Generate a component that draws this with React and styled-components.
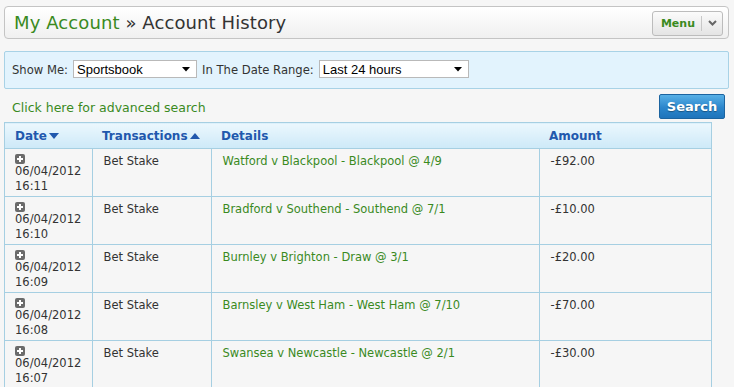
import React from "react";
import styled, { createGlobalStyle } from "styled-components";

const Global = createGlobalStyle`
  html, body { margin: 0; padding: 0; background: #f6f6f6; }
  body { font-family: "DejaVu Sans", Verdana, sans-serif; color: #333; }
`;

const Page = styled.div`
  padding: 6px 5px 0 4px;
  width: 725px;
`;

const Header = styled.div`
  height: 31px;
  border: 1px solid #c4c4c4;
  border-radius: 4px;
  background: linear-gradient(#ffffff, #f0f0f0);
  display: flex;
  align-items: center;
  justify-content: space-between;
  padding: 0 5px 0 9px;
`;

const Title = styled.h1`
  margin: 0;
  font-size: 18px;
  font-weight: normal;
  color: #333;
  letter-spacing: 0.1px;
`;

const Crumb = styled.span`
  color: #3a8a1e;
`;

const MenuButton = styled.div`
  display: flex;
  align-items: center;
  height: 23px;
  margin-top: 1px;
  border: 1px solid #bcbcbc;
  border-radius: 3px;
  background: linear-gradient(#fbfbfb, #e4e4e4);
  font-size: 11px;
  font-weight: bold;
  color: #3a8a1e;
`;

const MenuLabel = styled.span`
  padding: 0 6px 0 8px;
  border-right: 1px solid #c8c8c8;
  line-height: 15px;
`;

const MenuCaret = styled.span`
  display: flex;
  width: 20px;
  justify-content: center;
`;

const Filter = styled.div`
  margin-top: 12px;
  height: 36px;
  border: 1px solid #a8d2e6;
  border-radius: 2px;
  background: #e2f3fd;
  display: flex;
  align-items: center;
  padding: 0 7px;
  font-size: 11.6px;
  color: #333;
`;

const Label = styled.span`
  margin-right: 5px;
  margin-left: ${(p) => p.$ml || 0}px;
`;

const SelectBox = styled.div`
  width: ${(p) => p.$w}px;
  height: 16px;
  box-sizing: content-box;
  border: 1px solid #b9b9b9;
  background: #fff;
  display: flex;
  align-items: center;
  justify-content: space-between;
  padding: 0 6px 0 3px;
  margin-top: -2px;
  font-family: "Liberation Sans", Arial, sans-serif;
  font-size: 13px;
  color: #000;
`;

const ActionRow = styled.div`
  display: flex;
  align-items: center;
  justify-content: space-between;
  margin-top: 5px;
  height: 25px;
  padding-left: 8px;
`;

const AdvLink = styled.a`
  color: #3a8a1e;
  font-size: 12.5px;
  text-decoration: none;
  margin-top: 1px;
`;

const SearchButton = styled.button`
  height: 25px;
  width: 66px;
  border: 1px solid #1c64a0;
  border-radius: 2px;
  background: linear-gradient(#58b0e6, #2b86cc 55%, #1f74bb);
  color: #fff;
  font-family: "DejaVu Sans", Verdana, sans-serif;
  font-size: 13px;
  font-weight: bold;
  text-shadow: 0 1px 1px rgba(0, 0, 0, 0.35);
  padding: 0;
  margin-right: 4px;
`;

const Table = styled.table`
  margin-top: 3px;
  width: 708px;
  border-collapse: collapse;
  table-layout: fixed;
  font-size: 11.5px;
`;

const Th = styled.th`
  width: ${(p) => p.$w}px;
  height: 25px;
  padding: 0 10px;
  text-align: left;
  font-size: 12px;
  font-weight: bold;
  color: #2158ad;
  background: linear-gradient(#ebf7fd, #cde9f8);
  border-top: 1px solid #a6cfe2;
  border-bottom: 1px solid #a6cfe2;
  &:first-child { border-left: 1px solid #a6cfe2; }
  &:last-child { border-right: 1px solid #a6cfe2; }
  white-space: nowrap;
`;

const Arrow = styled.span`
  display: inline-block;
  margin-left: 2px;
  vertical-align: 1px;
  width: 0;
  height: 0;
  border-left: 5px solid transparent;
  border-right: 5px solid transparent;
  ${(p) => (p.$up ? "border-bottom: 6px solid #2158ad;" : "border-top: 6px solid #2158ad;")}
`;

const Td = styled.td`
  height: 48px;
  box-sizing: border-box;
  vertical-align: top;
  padding: 5px 10px 0 11px;
  border: 1px solid #a6cfe2;
  color: ${(p) => (p.$green ? "#3a8a1e" : "#333")};
  line-height: 14px;
`;

const DateCell = styled(Td)`
  padding-top: 4px;
  padding-left: 10px;
  line-height: 14.5px;
`;

const Plus = styled.span`
  display: block;
  width: 10px;
  height: 10px;
  margin-bottom: 1px;
`;

const Text = styled.div`
  padding-top: 0;
`;

const rows = [
  ["16:11", "Watford v Blackpool - Blackpool @ 4/9", "-£92.00"],
  ["16:10", "Bradford v Southend - Southend @ 7/1", "-£10.00"],
  ["16:09", "Burnley v Brighton - Draw @ 3/1", "-£20.00"],
  ["16:08", "Barnsley v West Ham - West Ham @ 7/10", "-£70.00"],
  ["16:07", "Swansea v Newcastle - Newcastle @ 2/1", "-£30.00"],
];

const PlusIcon = () => (
  <Plus>
    <svg width="10" height="10" viewBox="0 0 10 10">
      <rect x="0" y="0" width="10" height="10" rx="2" fill="#6b6b6b" />
      <path d="M5 2v6M2 5h6" stroke="#fff" strokeWidth="2" />
    </svg>
  </Plus>
);

const Caret = () => (
  <svg width="8" height="6" viewBox="0 0 8 6">
    <path d="M0 1h8L4 5.5z" fill="#000" />
  </svg>
);

export default function App() {
  return (
    <>
      <Global />
      <Page>
        <Header>
          <Title>
            <Crumb>My Account</Crumb> » Account History
          </Title>
          <MenuButton>
            <MenuLabel>Menu</MenuLabel>
            <MenuCaret>
              <svg width="9" height="6" viewBox="0 0 9 6">
                <path d="M1 1l3.5 3.5L8 1" stroke="#666" strokeWidth="2" fill="none" />
              </svg>
            </MenuCaret>
          </MenuButton>
        </Header>
        <Filter>
          <Label>Show Me:</Label>
          <SelectBox $w={113}>
            <span>Sportsbook</span>
            <Caret />
          </SelectBox>
          <Label $ml={5}>In The Date Range:</Label>
          <SelectBox $w={139}>
            <span>Last 24 hours</span>
            <Caret />
          </SelectBox>
        </Filter>
        <ActionRow>
          <AdvLink href="#">Click here for advanced search</AdvLink>
          <SearchButton>Search</SearchButton>
        </ActionRow>
        <Table>
          <thead>
            <tr>
              <Th $w={67}>
                Date<Arrow />
              </Th>
              <Th $w={99}>
                Transactions<Arrow $up />
              </Th>
              <Th $w={308}>Details</Th>
              <Th>Amount</Th>
            </tr>
          </thead>
          <tbody>
            {rows.map(([t, d, a]) => (
              <tr key={t}>
                <DateCell>
                  <PlusIcon />
                  06/04/2012
                  <br />
                  {t}
                </DateCell>
                <Td>
                  <Text>Bet Stake</Text>
                </Td>
                <Td $green>
                  <Text>{d}</Text>
                </Td>
                <Td>
                  <Text>{a}</Text>
                </Td>
              </tr>
            ))}
          </tbody>
        </Table>
      </Page>
    </>
  );
}
